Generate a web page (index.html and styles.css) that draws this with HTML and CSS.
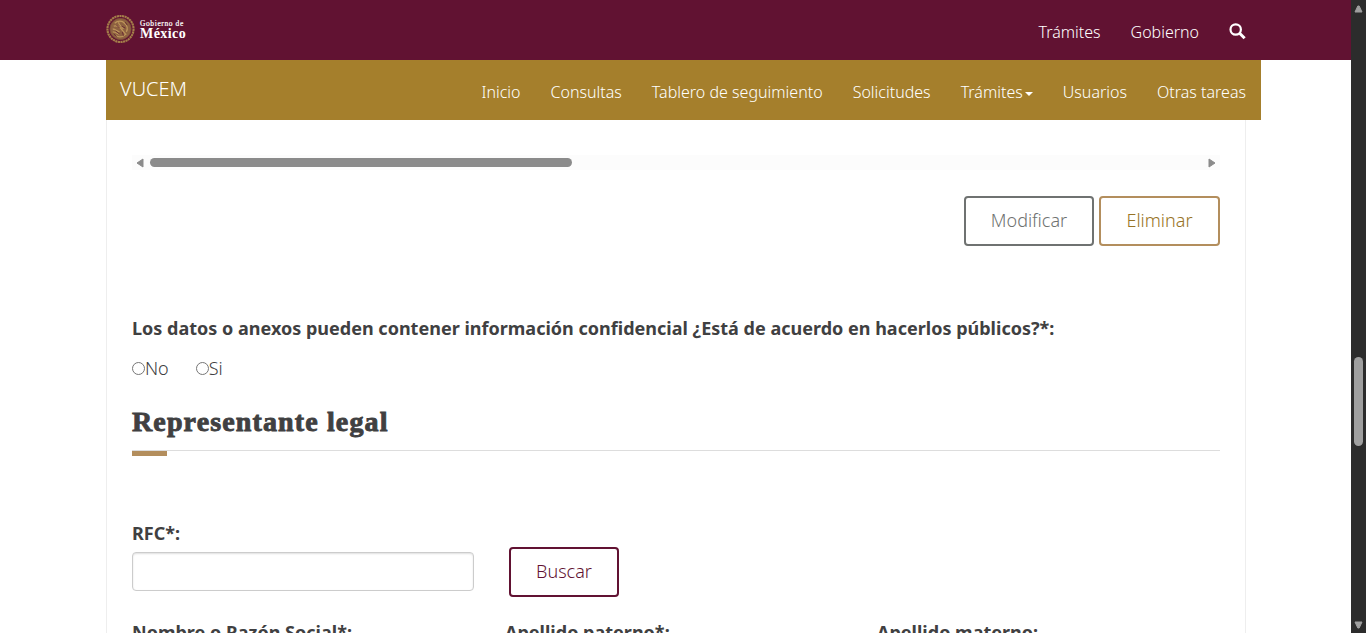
FILE: index.html
```html
<!DOCTYPE html>
<html lang="es">
<head>
<meta charset="utf-8">
<title>VUCEM</title>
<link rel="stylesheet" href="styles.css">
</head>
<body>
<div class="window">
  <div class="page">
    <header class="gov-bar">
      <div class="brand">
        <svg class="seal" viewBox="0 0 30 30" fill="none" stroke="#a57f4a">
          <circle cx="15" cy="15" r="13.500" stroke-width="2.200" stroke-dasharray="2.200 .5"/>
          <circle cx="15" cy="15" r="11" fill="#8d6140" stroke="#7b4938" stroke-width=".8"/>
          <path d="M9 9c3-3 8-3 10 0 3 2 4 6 2 9M8 12c3-1 5 0 7 2l5 6M7 15c3 0 4 2 7 3M7 18c3 0 5 2 8 3M13 8c0 3 3 4 5 7M10 22c4 2 8 1 11-2" stroke="#bd955a" stroke-width="1.300"/>
          <path d="M11 11l3 3M16 12l4 2M10 17l5 4M17 18l1 4M20 8l2 3M8 20l3 3" stroke="#672b34"/>
        </svg>
        <div class="wordmark"><span class="wordmark-top">Gobierno de</span><span class="wordmark-main">México</span></div>
      </div>
      <nav class="gov-links">
        <a class="tramites">Trámites</a><a class="gobierno">Gobierno</a>
        <svg class="search" viewBox="0 0 17 17" fill="none" stroke="#fff"><circle cx="6.7" cy="6.5" r="5.2" stroke-width="2.2"/><path d="M10.6 10.3l5 5" stroke-width="3"/></svg>
      </nav>
    </header>
    <nav class="sub-bar">
      <span class="product">VUCEM</span>
      <div class="menu"><a>Inicio</a><a>Consultas</a><a>Tablero de seguimiento</a><a>Solicitudes</a><a>Trámites<i class="caret"></i></a><a>Usuarios</a><a>Otras tareas</a></div>
    </nav>
    <main class="content">
      <div class="h-scroll">
        <svg class="h-arrow" viewBox="0 0 8 10"><path d="M7 1v8L1 5z" fill="#8b8b8b" stroke="#8b8b8b" stroke-linejoin="round"/></svg>
        <div class="h-thumb"></div>
        <svg class="h-arrow end" viewBox="0 0 8 10"><path d="M1 1v8l6-4z" fill="#8b8b8b" stroke="#8b8b8b" stroke-linejoin="round"/></svg>
      </div>
      <div class="actions"><button class="btn modify"><span>Modificar</span></button><button class="btn remove"><span>Eliminar</span></button></div>
      <p class="label question"><span>Los datos o anexos pueden contener información confidencial ¿Está de acuerdo en hacerlos públicos?*:</span></p>
      <div class="choices"><label><i class="radio"></i>No</label><label><i class="radio"></i>Si</label></div>
      <h2 class="heading">Representante legal</h2>
      <div class="rule"><div class="rule-accent"></div></div>
      <div class="search-row">
        <div class="field"><label class="label">RFC*:</label><input class="input" type="text"></div>
        <button class="btn find"><span>Buscar</span></button>
      </div>
      <div class="names"><span class="label">Nombre o Razón Social*:</span><span class="label">Apellido paterno*:</span><span class="label">Apellido materno:</span></div>
    </main>
  </div>
  <aside class="v-scroll">
    <svg class="v-up" viewBox="0 0 9 8"><path d="M1 7h7L5.200 1H3.800z" fill="#9f9f9f" stroke="#9f9f9f" stroke-linejoin="round"/></svg>
    <div class="v-thumb"></div>
    <svg class="v-down" viewBox="0 0 9 8"><path d="M1 1h7L5.200 7H3.800z" fill="#9f9f9f" stroke="#9f9f9f" stroke-linejoin="round"/></svg>
  </aside>
</div>
</body>
</html>
```
FILE: styles.css
```css
* { box-sizing: border-box; }
body { margin: 0; background: #fff; color: #404041; font: 300 18px/26px "Noto Sans", "Open Sans", sans-serif; overflow: hidden; }
.window { display: flex; height: 633px; overflow: hidden; }
.page { width: 1351px; height: 633px; overflow: hidden; }
.gov-bar { height: 60px; padding: 0 105px 0 106px; background: #611232; display: flex; justify-content: space-between; align-items: flex-start; color: #fff; }
.brand { display: flex; gap: 5px; padding-top: 14px; }
.seal { width: 29px; height: 30px; }
.wordmark { display: flex; flex-direction: column; padding-top: 5px; font-family: "Liberation Serif", serif; font-weight: 700; white-space: nowrap; }
.wordmark-top { font-size: 7.5px; line-height: 9px; letter-spacing: .6px; font-weight: 400; -webkit-text-stroke: .2px #fff; }
.wordmark-main { font-size: 14px; line-height: 11px; letter-spacing: .45px; }
.gov-links { display: flex; font-size: 16px; line-height: 24px; padding-top: 20px; }
.gobierno { margin: 0 30px; }
.search { width: 17px; height: 17px; margin-top: 3px; }
.sub-bar { width: 1155px; height: 60px; margin-left: 106px; padding: 0 15px 0 14px; background: #a57f2c; display: flex; justify-content: space-between; color: #fff; }
.product { font-size: 20px; line-height: 28px; padding-top: 15px; }
.menu { display: flex; gap: 30px; font-size: 16px; line-height: 24px; padding-top: 20px; white-space: nowrap; letter-spacing: .01px; }
.caret { display: inline-block; margin-left: 2px; vertical-align: 2px; border: 4px solid transparent; border-top-color: #fff; border-bottom: 0; }
.content { width: 1140px; height: 530px; margin-left: 106px; padding: 35px 25px 0; border: solid #eee; border-width: 0 1px; }
.h-scroll { width: 1088px; height: 15px; background: #fcfcfc; display: flex; align-items: center; padding: 0 4px; }
.h-arrow { width: 8px; height: 10px; }
.h-arrow.end { margin-left: auto; }
.h-thumb { width: 422px; height: 9px; margin-left: 6px; border-radius: 5px; background: #8b8b8b; }
.actions { display: flex; justify-content: flex-end; gap: 5px; margin-top: 26px; }
.btn { height: 50px; padding: 0 0 2px; background: #fff; border: 2px solid; border-radius: 4px; font: inherit; }
.modify { width: 130px; color: #6f7271; }
.remove { width: 121px; color: #b38e5d; }
.remove span { color: #977325; }
.label { font-weight: 700; white-space: nowrap; letter-spacing: .01px; }
.question { margin: 69px 0 0; }
.choices { display: flex; gap: 27px; margin-top: 14px; height: 26px; }
.choices label { display: flex; align-items: center; }
.radio { width: 13px; height: 13px; border: 1px solid #767676; border-radius: 50%; }
.heading { margin: 23px 0 0; font: 700 28px/36px "Liberation Serif", serif; letter-spacing: 1.13px; -webkit-text-stroke: .9px #404041; white-space: nowrap; }
.rule { height: 6px; margin-top: 10px; border-top: 1px solid #ddd; }
.rule-accent { width: 35px; height: 5px; background: #b38e5d; }
.search-row { display: flex; gap: 35px; margin-top: 64px; }
.field { display: flex; flex-direction: column; gap: 6px; }
.input { width: 342px; height: 39px; border: 1px solid #ccc; border-radius: 4px; box-shadow: inset 0 1px 2px rgba(0,0,0,.13); }
.find { width: 110px; margin-top: 27px; color: #611232; }
.names { display: grid; grid-template-columns: 373px 372px 1fr; margin-top: 22px; }
.v-scroll { width: 15px; height: 633px; background: #2c2c2c; display: flex; flex-direction: column; align-items: center; padding: 5px 1px 4px 0; }
.v-up, .v-down { width: 9px; height: 8px; flex: none; }
.v-thumb { width: 9px; height: 89px; margin-top: 344px; border-radius: 5px; background: #9f9f9f; }
.v-down { margin-top: auto; }
```
